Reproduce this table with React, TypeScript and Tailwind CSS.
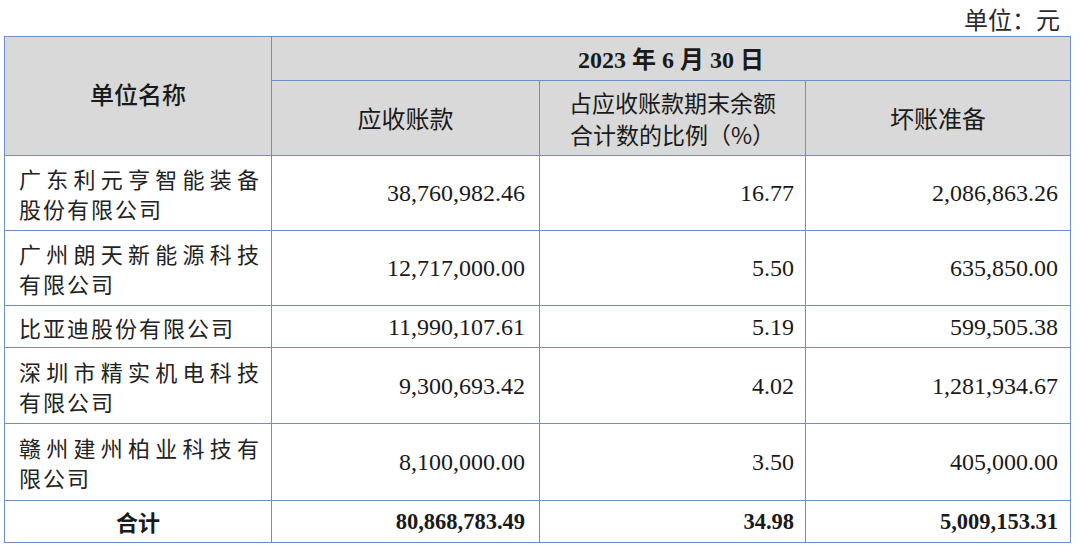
import React from "react";

const rows: { name: string[]; a: string; b: string; c: string; h: string }[] = [
  { name: ["广东利元亨智能装备", "股份有限公司"], a: "38,760,982.46", b: "16.77", c: "2,086,863.26", h: "h-[75px]" },
  { name: ["广州朗天新能源科技", "有限公司"], a: "12,717,000.00", b: "5.50", c: "635,850.00", h: "h-[75px]" },
  { name: ["比亚迪股份有限公司"], a: "11,990,107.61", b: "5.19", c: "599,505.38", h: "h-[42px]" },
  { name: ["深圳市精实机电科技", "有限公司"], a: "9,300,693.42", b: "4.02", c: "1,281,934.67", h: "h-[76px]" },
  { name: ["赣州建州柏业科技有", "限公司"], a: "8,100,000.00", b: "3.50", c: "405,000.00", h: "h-[77px]" },
];

const cjk = "font-['Noto_Sans_CJK_SC',sans-serif]";
const num = "font-['Liberation_Serif','Noto_Sans_CJK_SC',serif]";
const bd = "border border-[#6a8fca]";

export default function App() {
  return (
    <div className="w-[1080px] h-[550px] bg-white overflow-hidden text-[#1a1a1a]">
      <div className={`h-[36px] flex items-start justify-end pr-[20px] pt-[4px] text-[24px] leading-[30px] ${cjk} text-[#2a2a2a]`}>
        单位：元
      </div>
      <table className="ml-[4px] border-collapse table-fixed w-[1066px]">
        <colgroup>
          <col className="w-[267px]" />
          <col className="w-[268px]" />
          <col className="w-[266px]" />
          <col className="w-[265px]" />
        </colgroup>
        <tbody>
          <tr className="h-[44px] bg-[#d9d9d9]">
            <td rowSpan={2} className={`${bd} text-center align-middle pb-[4px] text-[24px] font-medium ${cjk}`}>
              单位名称
            </td>
            <td colSpan={3} className={`${bd} text-center align-middle text-[24px] font-bold ${num} pt-[2px]`}>
              2023 年 6 月 30 日
            </td>
          </tr>
          <tr className="h-[75px] bg-[#d9d9d9]">
            <td className={`${bd} text-center align-middle text-[24px] ${cjk}`}>应收账款</td>
            <td className={`${bd} text-center align-middle text-[23px] leading-[32px] ${cjk}`}>
              占应收账款期末余额
              <br />
              合计数的比例（%）
            </td>
            <td className={`${bd} text-center align-middle text-[24px] ${cjk}`}>坏账准备</td>
          </tr>
          {rows.map((r) => (
            <tr key={r.a} className={r.h}>
              <td className={`${bd} align-middle pl-[14px] pr-[12px] text-[22px] leading-[30px] ${cjk} text-[#222]`}>
                {r.name.map((l, i) => (
                  <div
                    key={l}
                    className={
                      i < r.name.length - 1 && r.name.length > 1
                        ? "text-justify [text-align-last:justify]"
                        : "tracking-[2px]"
                    }
                  >
                    {l}
                  </div>
                ))}
              </td>
              <td className={`${bd} align-middle text-right pr-[14px] text-[24px] ${num}`}>{r.a}</td>
              <td className={`${bd} align-middle text-right pr-[11px] text-[24px] ${num}`}>{r.b}</td>
              <td className={`${bd} align-middle text-right pr-[12px] text-[24px] ${num}`}>{r.c}</td>
            </tr>
          ))}
          <tr className="h-[42px]">
            <td className={`${bd} text-center align-middle text-[22px] font-bold ${cjk}`}>合计</td>
            <td className={`${bd} align-middle text-right pr-[14px] text-[22.5px] font-bold ${num}`}>80,868,783.49</td>
            <td className={`${bd} align-middle text-right pr-[11px] text-[22.5px] font-bold ${num}`}>34.98</td>
            <td className={`${bd} align-middle text-right pr-[12px] text-[22.5px] font-bold ${num}`}>5,009,153.31</td>
          </tr>
        </tbody>
      </table>
    </div>
  );
}
